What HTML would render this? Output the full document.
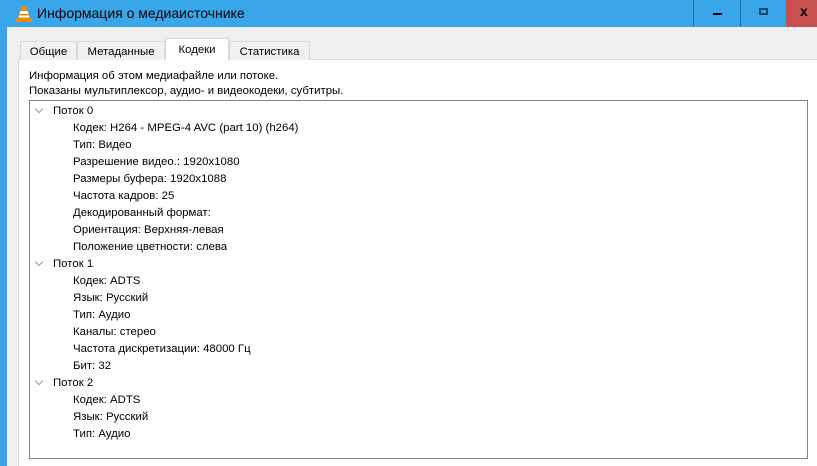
<!DOCTYPE html>
<html><head><meta charset="utf-8"><style>
*{margin:0;padding:0;box-sizing:border-box}
html{width:817px;height:466px;overflow:hidden}
body{width:817px;height:466px;overflow:hidden;background:#3aa6ea;font-family:"Liberation Sans",sans-serif;font-size:11.4px;color:#000;position:relative}
.t{position:absolute;white-space:nowrap}
#client{position:absolute;left:7px;top:27px;width:810px;height:439px;background:#f0f0f0}
.tab{position:absolute;top:41px;height:19px;border:1px solid #d9d9d9;border-bottom:none;background:#f0f0f0;padding:4px 0 0 0;text-align:center}
#panel{position:absolute;left:18px;top:59px;width:799px;height:407px;background:#fff;border-left:1px solid #d9d9d9;border-top:1px solid #d9d9d9}
#tree{position:absolute;left:29px;top:100px;width:779px;height:359px;border:1px solid #828282;background:#fff}
.row{position:absolute;white-space:nowrap}
.chev{position:absolute;width:6px;height:6px;border-right:1.2px solid #999;border-bottom:1.2px solid #999;transform:rotate(45deg)}
.btn{position:absolute;top:0;height:27px;border-left:1px solid #2a6a9a}
</style></head><body>
<svg style="position:absolute;left:16px;top:5px" width="16" height="17" viewBox="0 0 16 17"><path d="M6 1h4l4.5 13h-13z" fill="#f08a00"/><path d="M4.5 6h7l1 3h-9z M3.3 10.5h9.4l.8 2h-11z" fill="#fff"/><rect x="0" y="14" width="16" height="3" fill="#f08a00"/></svg>
<div class="t" style="left:37px;top:5px;font-size:14px;color:#000">Информация о медиаисточнике</div>
<div class="btn" style="left:693px;width:47px;background:#3aa6ea"><div style="position:absolute;left:19px;top:13px;width:9px;height:2px;background:#000"></div></div>
<div class="btn" style="left:740px;width:46px;background:#3aa6ea"><div style="position:absolute;left:18px;top:8px;width:9px;height:7px;border:2px solid #1a4a70"></div></div>
<div class="btn" style="left:786px;width:31px;background:#c75050;border:none"><div class="t" style="left:14px;top:3px;font-size:14px;font-weight:bold">x</div></div>
<div id="client"></div>
<div id="panel"></div>
<div class="tab" style="left:20px;width:57px">Общие</div>
<div class="tab" style="left:77px;width:88px">Метаданные</div>
<div class="tab" style="left:165px;width:64px;top:38px;height:23px;background:#fff;padding-top:5px">Кодеки</div>
<div class="tab" style="left:229px;width:81px">Статистика</div>
<div class="t" style="left:29px;top:70px">Информация об этом медиафайле или потоке.</div>
<div class="t" style="left:29px;top:85px">Показаны мультиплексор, аудио- и видеокодеки, субтитры.</div>
<div id="tree"></div>
<div class="chev" style="left:36px;top:106px"></div>
<div class="row" style="left:53px;top:105px">Поток 0</div>
<div class="row" style="left:73px;top:122px">Кодек: H264 - MPEG-4 AVC (part 10) (h264)</div>
<div class="row" style="left:73px;top:139px">Тип: Видео</div>
<div class="row" style="left:73px;top:156px">Разрешение видео.: 1920x1080</div>
<div class="row" style="left:73px;top:173px">Размеры буфера: 1920x1088</div>
<div class="row" style="left:73px;top:190px">Частота кадров: 25</div>
<div class="row" style="left:73px;top:207px">Декодированный формат:</div>
<div class="row" style="left:73px;top:224px">Ориентация: Верхняя-левая</div>
<div class="row" style="left:73px;top:241px">Положение цветности: слева</div>
<div class="chev" style="left:36px;top:259px"></div>
<div class="row" style="left:53px;top:258px">Поток 1</div>
<div class="row" style="left:73px;top:275px">Кодек: ADTS</div>
<div class="row" style="left:73px;top:292px">Язык: Русский</div>
<div class="row" style="left:73px;top:309px">Тип: Аудио</div>
<div class="row" style="left:73px;top:326px">Каналы: стерео</div>
<div class="row" style="left:73px;top:343px">Частота дискретизации: 48000 Гц</div>
<div class="row" style="left:73px;top:360px">Бит: 32</div>
<div class="chev" style="left:36px;top:378px"></div>
<div class="row" style="left:53px;top:377px">Поток 2</div>
<div class="row" style="left:73px;top:394px">Кодек: ADTS</div>
<div class="row" style="left:73px;top:411px">Язык: Русский</div>
<div class="row" style="left:73px;top:428px">Тип: Аудио</div>
</body></html>
